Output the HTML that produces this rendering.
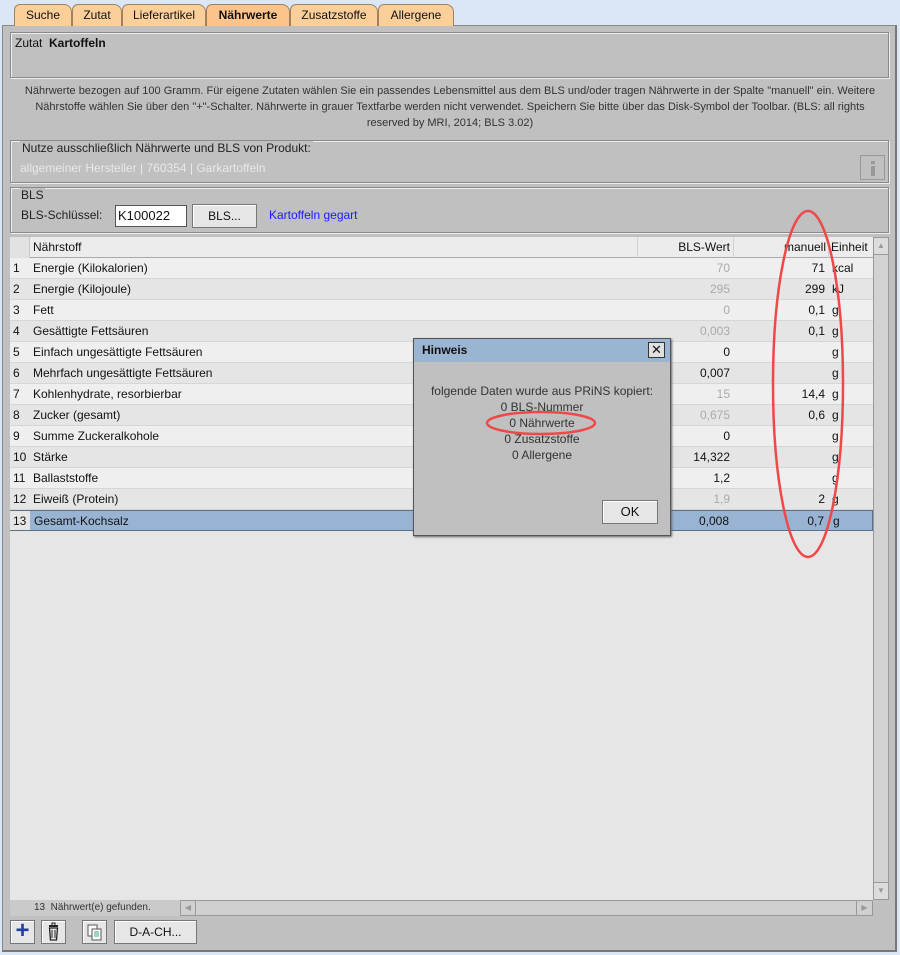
<!DOCTYPE html>
<html><head><meta charset="utf-8"><style>
*{box-sizing:border-box;margin:0;padding:0}
body{width:900px;height:955px;background:#dce7f5;font-family:"Liberation Sans",Arial,sans-serif;font-size:12px;color:#111;position:relative;overflow:hidden}
.a{position:absolute}
.tab{position:absolute;top:4px;height:22px;background:#fbcf9a;border:1px solid #a08060;border-bottom:none;border-radius:6px 8px 0 0;font-size:12px;text-align:center;line-height:21px}
.box{position:absolute;border:1px solid #8a8a8a;box-shadow:inset 1px 1px 0 #eee,1px 1px 0 #eee}
.btn{position:absolute;background:#e6e6e6;border:1px solid #777;box-shadow:inset 1px 1px 0 #fff;text-align:center}
.row{position:absolute;left:10px;width:863px;height:21px;line-height:20px;border-bottom:1px solid #d6d6d6}
.row span{position:absolute;top:0}
.c0{left:3px}.c1{left:23px}.c2{right:143px;text-align:right}.c3{right:48px}.c4{left:822px}
.g{color:#aaa}
</style></head><body>
<div class="a" style="left:2px;top:25px;width:895px;height:927px;background:#c0c0c0;border:1px solid #888;border-right:2px solid #777;border-bottom:2px solid #777"></div>
<div class="tab" style="left:14px;width:58px">Suche</div>
<div class="tab" style="left:72px;width:50px">Zutat</div>
<div class="tab" style="left:122px;width:84px">Lieferartikel</div>
<div class="tab" style="left:206px;width:84px;font-weight:bold;background:#fcc48a">Nährwerte</div>
<div class="tab" style="left:290px;width:88px">Zusatzstoffe</div>
<div class="tab" style="left:378px;width:76px">Allergene</div>

<div class="box" style="left:10px;top:32px;width:879px;height:46px"></div>
<div class="a" style="left:15px;top:36px">Zutat&nbsp; <b>Kartoffeln</b></div>
<div class="a" style="left:14px;top:83px;width:872px;text-align:center;font-size:11px;line-height:16px;color:#333">Nährwerte bezogen auf 100 Gramm. Für eigene Zutaten wählen Sie ein passendes Lebensmittel aus dem BLS und/oder tragen Nährwerte in der Spalte "manuell" ein. Weitere Nährstoffe wählen Sie über den "+"-Schalter. Nährwerte in grauer Textfarbe werden nicht verwendet. Speichern Sie bitte über das Disk-Symbol der Toolbar. (BLS: all rights reserved by MRI, 2014; BLS 3.02)</div>

<div class="box" style="left:10px;top:140px;width:879px;height:43px"></div>
<div class="a" style="left:20px;top:141px;background:#c0c0c0;padding:0 2px;color:#222">Nutze ausschließlich Nährwerte und BLS von Produkt:</div>
<div class="a" style="left:20px;top:161px;color:#e8e8e8">allgemeiner Hersteller | 760354 | Garkartoffeln</div>
<div class="a" style="left:860px;top:155px;width:25px;height:25px;border:1px solid #999"><div class="a" style="left:10px;top:5px;width:4px;height:3px;background:#999"></div><div class="a" style="left:10px;top:10px;width:4px;height:10px;background:#999"></div></div>

<div class="box" style="left:10px;top:187px;width:879px;height:46px"></div>
<div class="a" style="left:20px;top:188px;background:#c0c0c0;padding:0 1px;color:#222">BLS</div>
<div class="a" style="left:21px;top:208px;color:#222">BLS-Schlüssel:</div>
<div class="a" style="left:115px;top:205px;width:72px;height:22px;background:#fff;border:1px solid #555;padding:2px 2px;font-size:13px">K100022</div>
<div class="btn" style="left:192px;top:204px;width:65px;height:24px;line-height:22px">BLS...</div>
<div class="a" style="left:269px;top:208px;color:#1a1aff">Kartoffeln gegart</div>

<div class="a" style="left:10px;top:237px;width:863px;height:663px;background:#e6e6e6"></div>
<div class="a" style="left:10px;top:237px;width:863px;height:21px;background:#ececec;border-bottom:1px solid #aaa"></div>
<div class="a" style="left:10px;top:237px;width:20px;height:294px;background:#e2e2e2;border-right:1px solid #c8c8c8"></div>
<div class="a" style="left:33px;top:240px">Nährstoff</div>
<div class="a" style="left:637px;top:237px;width:1px;height:294px;background:#d0d0d0"></div>
<div class="a" style="left:733px;top:237px;width:1px;height:294px;background:#d0d0d0"></div>
<div class="a" style="left:828px;top:237px;width:1px;height:294px;background:#d0d0d0"></div>
<div class="a" style="left:640px;top:240px;width:90px;text-align:right">BLS-Wert</div>
<div class="a" style="left:736px;top:240px;width:90px;text-align:right">manuell</div>
<div class="a" style="left:831px;top:240px">Einheit</div>

<div class="row" style="top:258px;background:#efefef"><span class="c0">1</span><span class="c1">Energie (Kilokalorien)</span><span class="c2 g">70</span><span class="c3">71</span><span class="c4">kcal</span></div>
<div class="row" style="top:279px;background:#e5e5e5"><span class="c0">2</span><span class="c1">Energie (Kilojoule)</span><span class="c2 g">295</span><span class="c3">299</span><span class="c4">kJ</span></div>
<div class="row" style="top:300px;background:#efefef"><span class="c0">3</span><span class="c1">Fett</span><span class="c2 g">0</span><span class="c3">0,1</span><span class="c4">g</span></div>
<div class="row" style="top:321px;background:#e5e5e5"><span class="c0">4</span><span class="c1">Gesättigte Fettsäuren</span><span class="c2 g">0,003</span><span class="c3">0,1</span><span class="c4">g</span></div>
<div class="row" style="top:342px;background:#efefef"><span class="c0">5</span><span class="c1">Einfach ungesättigte Fettsäuren</span><span class="c2">0</span><span class="c4">g</span></div>
<div class="row" style="top:363px;background:#e5e5e5"><span class="c0">6</span><span class="c1">Mehrfach ungesättigte Fettsäuren</span><span class="c2">0,007</span><span class="c4">g</span></div>
<div class="row" style="top:384px;background:#efefef"><span class="c0">7</span><span class="c1">Kohlenhydrate, resorbierbar</span><span class="c2 g">15</span><span class="c3">14,4</span><span class="c4">g</span></div>
<div class="row" style="top:405px;background:#e5e5e5"><span class="c0">8</span><span class="c1">Zucker (gesamt)</span><span class="c2 g">0,675</span><span class="c3">0,6</span><span class="c4">g</span></div>
<div class="row" style="top:426px;background:#efefef"><span class="c0">9</span><span class="c1">Summe Zuckeralkohole</span><span class="c2">0</span><span class="c4">g</span></div>
<div class="row" style="top:447px;background:#e5e5e5"><span class="c0">10</span><span class="c1">Stärke</span><span class="c2">14,322</span><span class="c4">g</span></div>
<div class="row" style="top:468px;background:#efefef"><span class="c0">11</span><span class="c1">Ballaststoffe</span><span class="c2">1,2</span><span class="c4">g</span></div>
<div class="row" style="top:489px;background:#e5e5e5"><span class="c0">12</span><span class="c1">Eiweiß (Protein)</span><span class="c2 g">1,9</span><span class="c3">2</span><span class="c4">g</span></div>
<div class="row" style="top:510px;background:#98b4d2;border:1px solid #5a6f8c"><span class="c0" style="background:#e6e6e6;left:-1px;width:20px;height:19px;padding-left:3px">13</span><span class="c1">Gesamt-Kochsalz</span><span class="c2">0,008</span><span class="c3">0,7</span><span class="c4">g</span></div>

<div class="a" style="left:873px;top:237px;width:16px;height:663px;background:#d2d2d2;border:1px solid #999"></div>
<div class="a" style="left:873px;top:237px;width:16px;height:18px;border:1px solid #999;background:#dcdcdc;color:#999;font-size:8px;text-align:center;line-height:16px">▲</div>
<div class="a" style="left:873px;top:882px;width:16px;height:18px;border:1px solid #999;background:#dcdcdc;color:#999;font-size:8px;text-align:center;line-height:16px">▼</div>
<div class="a" style="left:10px;top:900px;width:863px;height:16px;background:#d0d0d0;border:1px solid #999"></div>
<div class="a" style="left:10px;top:900px;width:170px;height:16px;background:#cacaca;font-size:10px;line-height:16px;padding-left:24px;color:#333">13&nbsp; Nährwert(e) gefunden.</div>
<div class="a" style="left:180px;top:900px;width:16px;height:16px;border:1px solid #999;color:#999;font-size:8px;text-align:center;line-height:14px">◀</div>
<div class="a" style="left:856px;top:900px;width:17px;height:16px;border:1px solid #999;color:#999;font-size:8px;text-align:center;line-height:14px">▶</div>

<div class="btn" style="left:10px;top:920px;width:25px;height:24px;color:#1f3fa6;font-size:24px;font-weight:bold;line-height:20px">+</div>
<div class="btn" style="left:41px;top:920px;width:25px;height:24px"><svg width="23" height="22"><rect x="7" y="4" width="9" height="2" fill="#222"/><rect x="10" y="2" width="3" height="3" fill="none" stroke="#222"/><path d="M7.5 7h8l-1 12h-6z" fill="none" stroke="#222" stroke-width="1.3"/><path d="M10 9v8M13 9v8" stroke="#222"/></svg></div>
<div class="btn" style="left:82px;top:920px;width:25px;height:24px"><svg width="23" height="22"><rect x="5" y="4" width="9" height="11" fill="#fff" stroke="#555"/><rect x="9" y="8" width="9" height="11" fill="#fff" stroke="#555"/><path d="M11 11h5M11 13h5M11 15h5" stroke="#3a8"/></svg></div>
<div class="btn" style="left:114px;top:920px;width:83px;height:24px;line-height:22px">D-A-CH...</div>

<div class="a" style="left:413px;top:338px;width:258px;height:198px;background:#c0c0c0;border:1px solid #555;box-shadow:1px 1px 2px #666"></div>
<div class="a" style="left:414px;top:339px;width:256px;height:23px;background:#9ab5d2"></div>
<div class="a" style="left:422px;top:343px;font-weight:bold">Hinweis</div>
<div class="a" style="left:648px;top:342px;width:17px;height:16px;background:#e0e0e0;border:1px solid #333;text-align:center;font-size:13px;line-height:13px">✕</div>
<div class="a" style="left:414px;top:383px;width:256px;text-align:center;line-height:16px;color:#333">folgende Daten wurde aus PRiNS kopiert:<br>0 BLS-Nummer<br>0 Nährwerte<br>0 Zusatzstoffe<br>0 Allergene</div>
<div class="btn" style="left:602px;top:500px;width:56px;height:24px;line-height:22px;font-size:13px">OK</div>

<svg class="a" style="left:0;top:0" width="900" height="955"><ellipse cx="808" cy="384" rx="35" ry="173" fill="none" stroke="#f04848" stroke-width="2.5"/><ellipse cx="541" cy="423" rx="54" ry="11" fill="none" stroke="#f04848" stroke-width="2.5"/></svg>
</body></html>
